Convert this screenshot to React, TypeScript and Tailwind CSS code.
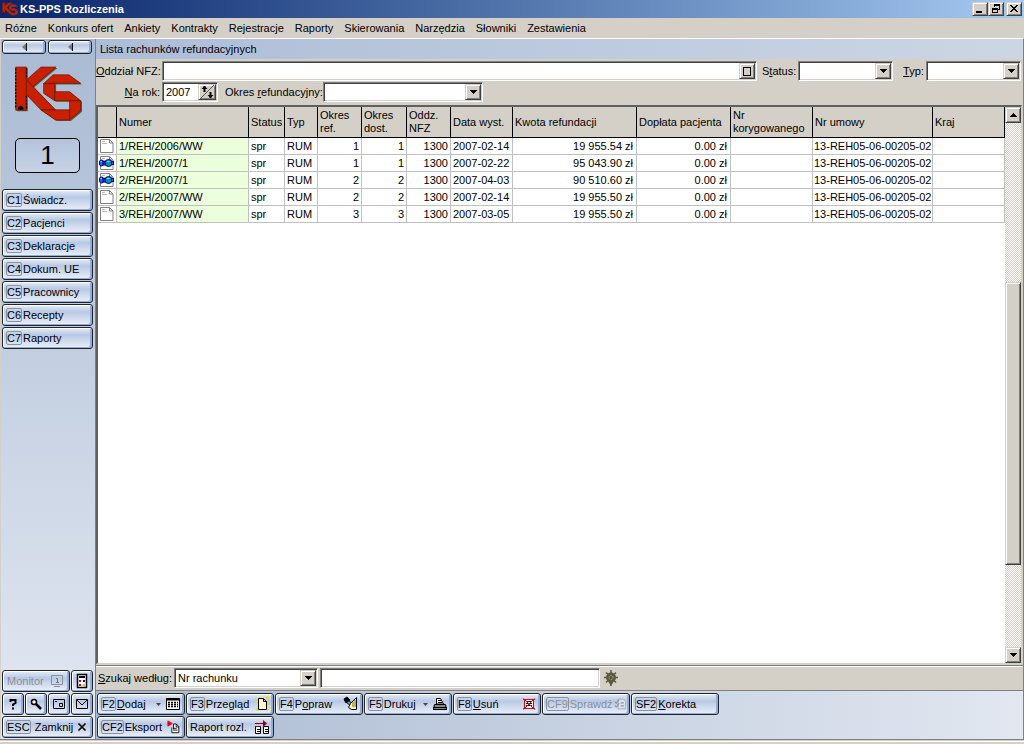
import type { ReactNode } from "react";
import clsx from "clsx";

interface Invoice {
  number: string;
  locked: boolean;
  refPeriod: number;
  supplyPeriod: number;
  date: string;
  amount: string;
}

const MENU = [
  "Różne",
  "Konkurs ofert",
  "Ankiety",
  "Kontrakty",
  "Rejestracje",
  "Raporty",
  "Skierowania",
  "Narzędzia",
  "Słowniki",
  "Zestawienia",
];

const MODULES = [
  ["C1", "Świadcz."],
  ["C2", "Pacjenci"],
  ["C3", "Deklaracje"],
  ["C4", "Dokum. UE"],
  ["C5", "Pracownicy"],
  ["C6", "Recepty"],
  ["C7", "Raporty"],
];

const COLUMNS = [
  { label: "", width: "w-[19px]" },
  { label: "Numer", width: "w-[132px]" },
  { label: "Status", width: "w-[36px]" },
  { label: "Typ", width: "w-[33px]" },
  { label: "Okres ref.", width: "w-[44px]" },
  { label: "Okres dost.", width: "w-[45px]" },
  { label: "Oddz. NFZ", width: "w-[44px]" },
  { label: "Data wyst.", width: "w-[62px]" },
  { label: "Kwota refundacji", width: "w-[124px]" },
  { label: "Dopłata pacjenta", width: "w-[94px]" },
  { label: "Nr korygowanego", width: "w-[82px]" },
  { label: "Nr umowy", width: "w-[120px]" },
  { label: "Kraj", width: "" },
];

const INVOICES: Invoice[] = [
  { number: "1/REH/2006/WW", locked: false, refPeriod: 1, supplyPeriod: 1, date: "2007-02-14", amount: "19 955.54 zł" },
  { number: "1/REH/2007/1", locked: true, refPeriod: 1, supplyPeriod: 1, date: "2007-02-22", amount: "95 043.90 zł" },
  { number: "2/REH/2007/1", locked: true, refPeriod: 2, supplyPeriod: 2, date: "2007-04-03", amount: "90 510.60 zł" },
  { number: "2/REH/2007/WW", locked: false, refPeriod: 2, supplyPeriod: 2, date: "2007-02-14", amount: "19 955.50 zł" },
  { number: "3/REH/2007/WW", locked: false, refPeriod: 3, supplyPeriod: 3, date: "2007-03-05", amount: "19 955.50 zł" },
];

const RAISED =
  "border border-t-[#d4d0c8] border-l-[#d4d0c8] border-r-[#404040] border-b-[#404040] bg-[#d4d0c8] shadow-[inset_1px_1px_0_#fff,inset_-1px_-1px_0_#808080]";
const SUNKEN =
  "border border-t-[#808080] border-l-[#808080] border-r-white border-b-white bg-white shadow-[inset_1px_1px_0_#404040,inset_-1px_-1px_0_#d4d0c8]";

function Logo({ className }: { className?: string }) {
  return (
    <svg viewBox="42 97 202 166" className={className} aria-hidden="true">
      <g fill="#5c5a42" transform="translate(4 3)">
        <path d="M47 100h32v128H47zM79 138l43-38h45l-69 58 67 69h42v-27h-44l-33-22v-28l28-26h47l35 25h-77v24h44l33 27v30l-33 27h-42l-43-29-43-45z" />
      </g>
      <g fill="#c82000" stroke="#6e1200" strokeWidth="2" strokeLinejoin="round">
        <path d="M47 100h32v128H47z" />
        <path d="M79 138l43-38h45l-69 58z" />
        <path d="M79 138l86 89h-43l-43-45z" />
        <path d="M130 149l28-26h47l35 25h-77z" />
        <path d="M130 149h33v51l-33-22z" />
        <path d="M163 173h44l33 27h-77z" />
        <path d="M207 200h33v30l-33 27z" />
        <path d="M122 227h85v30h-42z" />
      </g>
      <path d="M47 104v120M79 104v30M79 186v40" stroke="#111" strokeWidth="4" strokeDasharray="6 4" />
      <path d="M54 227v-6l6-6h4l6 6v6z" fill="#000" />
    </svg>
  );
}

function DocIcon({ locked }: { locked: boolean }) {
  return (
    <svg width="16" height="16" viewBox="0 0 16 16" className="mx-auto block" aria-hidden="true">
      <path d="M1.5 1.5h9l3.5 3.5v9.5h-12.5z" fill="#fff" stroke="#808080" />
      <path d="M10.5 1.5v3.5h3.5" fill="none" stroke="#808080" />
      <path d="M3 3.5h3M3 5.5h5" stroke="#b8b8b8" />
      {locked && (
        <g stroke="#000080">
          <rect x="0.5" y="5" width="4" height="6" rx="2" fill="#2868f0" />
          <rect x="4" y="6.5" width="4" height="3.500" fill="#0c50d8" />
          <circle cx="9.5" cy="8" r="3.5" fill="#0a90b8" />
          <rect x="12.500" y="6.500" width="2" height="3" fill="#2868f0" />
          <path d="M8 6.5h2.5M1.500 6.500h1.500" stroke="#50f0e8" />
        </g>
      )}
    </svg>
  );
}

function Arrow({ up = false }: { up?: boolean }) {
  return (
    <svg width="7" height="4" viewBox="0 0 7 4" shapeRendering="crispEdges" aria-hidden="true">
      <path d={up ? "M3 0h1v1h1v1h1v1h1v1H0V3h1V2h1V1h1z" : "M0 0h7v1H6v1H5v1H4v1H3V3H2V2H1V1H0z"} />
    </svg>
  );
}

function WindowButton({ label, children }: { label: string; children: ReactNode }) {
  return (
    <button type="button" aria-label={label} className={clsx(RAISED, "flex h-[14px] w-4 items-center justify-center")}>
      <svg width="12" height="10" viewBox="0 0 12 10" shapeRendering="crispEdges">
        {children}
      </svg>
    </button>
  );
}

interface GlossButtonProps {
  hotkey?: string;
  label?: ReactNode;
  title?: string;
  icon?: ReactNode;
  menu?: boolean;
  disabled?: boolean;
  className?: string;
}

function GlossButton({ hotkey, label, title, icon, menu, disabled, className }: GlossButtonProps) {
  return (
    <button
      type="button"
      aria-label={title}
      disabled={disabled}
      className={clsx(
        "flex items-center rounded-[3px] border border-[#20242c] bg-linear-to-b from-[#e4edfa] via-[#b8c8e4] via-35% to-[#eaf0f9] whitespace-nowrap shadow-[inset_1px_1px_0_#fff,inset_-2px_-1px_0_#94abd6]",
        disabled ? "text-[#8a8f98]" : "text-black",
        className
      )}
    >
      {hotkey && (
        <span className="mr-px flex h-[14px] shrink-0 items-center rounded-[2px] border border-[#8c929c]">
          {hotkey}
        </span>
      )}
      {label && <span>{label}</span>}
      {icon && (
        <span className={clsx("flex shrink-0 items-center gap-1", label && "ml-auto")}>
          {menu && (
            <svg width="5" height="3" viewBox="0 0 5 3" aria-hidden="true">
              <path d="M0 0h5L2.5 3z" fill="#444" />
            </svg>
          )}
          {icon}
        </span>
      )}
    </button>
  );
}

function Icon({ children, size = 16 }: { children: ReactNode; size?: number }) {
  return (
    <svg width={size} height={size} viewBox="0 0 16 16" fill="none" stroke="#000" aria-hidden="true">
      {children}
    </svg>
  );
}

const gridIcon = (
  <Icon>
    <path d="M1.5 2.5h13v11h-13z" fill="#fff" />
    <path d="M1 3.5h14" strokeWidth="2" />
    <path d="M3 6.5h10M3 8.5h10M3 10.5h10" strokeWidth="1.500" strokeDasharray="2 1" />
  </Icon>
);
const newDocIcon = (
  <Icon>
    <path d="M1 3l3 2M2 14l3-2M12 2l3-1M12 12l3 2M13 8h3M6 1v2" stroke="#f0e000" strokeWidth="2" />
    <path d="M4.5 2.5h5l3 3v8h-8z" fill="#fff8c8" />
    <path d="M9.5 2.5v3h3" />
  </Icon>
);
const editIcon = (
  <Icon>
    <path d="M1.5 4.5l2-2 8 7-2 2z" fill="#20c8d0" />
    <path d="M1 3l3-2 3 3-4 3z" fill="#000" />
    <path d="M7.5 7.5l6-6v12l-5 0-3-2z" fill="#fff8b0" />
    <path d="M10 6v5M12 4v7" stroke="#706820" />
  </Icon>
);
const printIcon = (
  <Icon>
    <path d="M4.5 8V2.5h4l3 5.5z" fill="#fff" />
    <path d="M6 4.5h3M6 6.5h4" />
    <path d="M2.5 8.5h11l1 5h-13z" fill="#888" />
    <path d="M1 11.5h14M1 13.5h14" />
  </Icon>
);
const deleteIcon = (
  <Icon>
    <path d="M3.5 3.5h9v9h-9z" fill="#fff" />
    <path d="M5 5.5h6M5 7.5h6M5 9.5h6" />
    <path d="M2.5 2.5l11 11M13.5 2.5l-11 11M2 3.5h12M2 12.5h12M3.500 3v10M12.500 3v10" stroke="#e00010" />
  </Icon>
);
const checkIcon = (
  <Icon size={12}>
    <path d="M5.5 1.5h7l3 3v10h-10z" fill="#dce3ee" stroke="#9aa0aa" />
    <path d="M1 5l2 2 4-5M1 10l2 2 4-5M9 6.5h4M9 10.5h4" stroke="#8a8f98" strokeWidth="1.500" />
  </Icon>
);
const exportIcon = (
  <Icon size={14}>
    <path d="M1 1l5 3-5 3z" fill="#f00010" stroke="#f00010" />
    <path d="M5.5 8.5v6h8v-7l-3-3h-3v6" fill="#fff" />
    <path d="M7 9.5h4M7 11.5h5M10.5 5v3h3" />
  </Icon>
);
const reportIcon = (
  <Icon>
    <path d="M1.5 7.5h5v7h-5zM9.5 7.5h5v7h-5z" fill="#fff" />
    <path d="M3 10.5h3M3 12.5h3M11 10.5h3M11 12.5h3" />
    <path d="M1 4.5h11M1 7.5h6" stroke="#900010" />
    <path d="M9 1l4 3.5L9 8z" fill="#900010" stroke="none" />
  </Icon>
);
const monitorIcon = (
  <Icon>
    <path d="M2.5 2.5h11v9h-11zM5 13.5h6" stroke="#8a8f98" />
    <path d="M7 5.5h1.5v4M7 9.5h3" stroke="#777" />
  </Icon>
);
const calculatorIcon = (
  <Icon>
    <path d="M3.5 1.5h9v13h-9z" fill="#fff" strokeWidth="1.500" />
    <path d="M5 4h6" strokeWidth="2" />
    <path d="M5 8h2M5 12h2" stroke="#e00000" strokeWidth="2" />
    <path d="M9 8h2" stroke="#0000d0" strokeWidth="2" />
    <path d="M9 12h2" stroke="#e0c000" strokeWidth="2" />
  </Icon>
);
const helpIcon = (
  <Icon>
    <path d="M5.5 6V4h5v3l-2.500 1.500V10M8 11.5v2" strokeWidth="2" />
  </Icon>
);
const searchIcon = (
  <Icon>
    <circle cx="6" cy="6" r="2.500" fill="#fff" strokeWidth="1.500" />
    <path d="M8 8l5 5" strokeWidth="2.500" />
  </Icon>
);
const photoIcon = (
  <Icon>
    <path d="M2.5 3.5h11v9h-11z" />
    <path d="M4 5.5h2M8.500 7.500h3v3h-3z" />
  </Icon>
);
const mailIcon = (
  <Icon>
    <path d="M2.5 3.5h11v9h-11zM3 4l5 5 5-5" />
  </Icon>
);
const closeIcon = (
  <Icon size={14}>
    <path d="M4 4l8 8M12 4l-8 8" strokeWidth="2" />
  </Icon>
);

const ACTIONS: GlossButtonProps[] = [
  { hotkey: "F2", label: <><u>D</u>odaj</>, icon: gridIcon, menu: true },
  { hotkey: "F3", label: "Przegląd", icon: newDocIcon },
  { hotkey: "F4", label: <>P<u>o</u>praw</>, icon: editIcon },
  { hotkey: "F5", label: "Drukuj", icon: printIcon, menu: true },
  { hotkey: "F8", label: <><u>U</u>suń</>, icon: deleteIcon },
  { hotkey: "CF9", label: "Sprawdź", icon: checkIcon, disabled: true },
  { hotkey: "SF2", label: <><u>K</u>orekta</> },
];

const EXPORTS: GlossButtonProps[] = [
  { hotkey: "CF2", label: "Eksport", icon: exportIcon },
  { label: "Raport rozl.", icon: reportIcon },
];

function SelectBox({ id, options, className }: { id: string; options: string[]; className: string }) {
  return (
    <div className={clsx(SUNKEN, "relative h-5", className)}>
      <select id={id} className="h-full w-full appearance-none bg-transparent pr-4 pl-[3px] outline-none">
        {options.map((option) => (
          <option key={option}>{option}</option>
        ))}
      </select>
      <span
        className={clsx(RAISED, "pointer-events-none absolute top-px right-px bottom-px flex w-4 items-center justify-center")}
      >
        <Arrow />
      </span>
    </div>
  );
}

function Sidebar() {
  return (
    <aside className="flex w-24 shrink-0 flex-col border-r border-l border-l-[#d4d0c8] border-r-[#808080] bg-linear-to-b from-[#a9bad3] to-[#e4e9f2] pt-px pr-0.5 pl-px">
      <div className="flex gap-0.5">
        {["Poprzedni", "Wstecz"].map((title) => (
          <GlossButton
            key={title}
            title={title}
            className="h-[14px] w-11 justify-center"
            icon={
              <svg width="5" height="8" viewBox="0 0 5 8">
                <path d="M4.5 0v8L0 4z" fill="#777" />
                <path d="M4.5 0v8" stroke="#111" />
              </svg>
            }
          />
        ))}
      </div>
      <Logo className="mt-3 ml-3 h-14 w-[68px]" />
      <div className="mx-auto mt-4 flex h-[35px] w-[65px] items-center justify-center rounded-[5px] border border-black bg-linear-to-b from-[#b4c4dc] to-[#c6d2e5] text-[26px]">
        1
      </div>
      <nav className="mt-4 flex flex-col gap-px">
        {MODULES.map(([hotkey, label]) => (
          <GlossButton key={hotkey} hotkey={hotkey} label={label} className="h-[22px] w-[91px] pl-[3px]" />
        ))}
      </nav>
      <div className="mt-auto flex w-[91px] flex-col gap-px pb-px">
        <div className="flex gap-px">
          <GlossButton label="Monitor" disabled icon={monitorIcon} className="h-[22px] flex-1 pr-1 pl-1" />
          <GlossButton title="Kalkulator" icon={calculatorIcon} className="h-[22px] w-[22px] justify-center" />
        </div>
        <div className="grid grid-cols-4 gap-px">
          <GlossButton title="Pomoc" icon={helpIcon} className="h-[22px] justify-center" />
          <GlossButton title="Szukaj" icon={searchIcon} className="h-[22px] justify-center" />
          <GlossButton title="Zdjęcie" icon={photoIcon} className="h-[22px] justify-center" />
          <GlossButton title="Poczta" icon={mailIcon} className="h-[22px] justify-center" />
        </div>
        <GlossButton hotkey="ESC" label={<>&nbsp;Zamknij</>} icon={closeIcon} className="h-[22px] pr-[3px] pl-[3px]" />
      </div>
    </aside>
  );
}

function Filters() {
  return (
    <div className="flex flex-col gap-px pt-0.5 pr-0.5 pb-[3px]">
      <div className="flex items-center">
        <label htmlFor="branch" className="w-[66px] whitespace-nowrap">
          <u>O</u>ddział NFZ:
        </label>
        <div className={clsx(SUNKEN, "flex h-5 flex-1 p-px")}>
          <input id="branch" className="min-w-0 flex-1 bg-transparent px-0.5 outline-none" />
          <button type="button" aria-label="Wybierz oddział" className={clsx(RAISED, "flex w-4 items-center justify-center")}>
            <span className="h-[9px] w-2 border border-black" />
          </button>
        </div>
        <label htmlFor="status" className="ml-[5px] w-9">
          S<u>t</u>atus:
        </label>
        <SelectBox id="status" options={[""]} className="w-[95px]" />
        <label htmlFor="type" className="ml-[10px] w-[23px]">
          <u>T</u>yp:
        </label>
        <SelectBox id="type" options={[""]} className="w-[95px]" />
      </div>
      <div className="flex items-center">
        <label htmlFor="year" className="w-[66px] pr-0.5 text-right">
          <u>N</u>a rok:
        </label>
        <div className={clsx(SUNKEN, "flex h-5 w-14 p-px")}>
          <input id="year" defaultValue="2007" className="min-w-0 flex-1 bg-transparent px-0.5 outline-none" />
          <button type="button" aria-label="Zmień rok" className={clsx(RAISED, "flex w-[18px] items-center justify-center")}>
            <svg width="14" height="14" viewBox="0 0 14 14" fill="none" stroke="#000">
              <path d="M0 14L14 0" stroke="#555" />
              <path d="M4.5 1v6M10.5 7v6" strokeWidth="2" />
              <path d="M1.5 4l3-3 3 3zM7.5 10l3 3 3-3z" fill="#000" stroke="none" />
            </svg>
          </button>
        </div>
        <label htmlFor="period" className="ml-[7px] w-[98px] whitespace-nowrap">
          Okres <u>r</u>efundacyjny:
        </label>
        <SelectBox id="period" options={[""]} className="w-40" />
      </div>
    </div>
  );
}

function InvoiceTable() {
  const line = "h-[17px] border-r border-b border-[#c0c0c0] whitespace-nowrap overflow-hidden";
  const cell = clsx(line, "px-0.5");
  return (
    <table className="w-full table-fixed border-separate border-spacing-0 bg-white">
      <thead>
        <tr className="bg-[#d4d0c8]">
          {COLUMNS.map((column) => (
            <th
              key={column.label}
              className={clsx(
                "h-[31px] border-r border-b border-black px-0.5 text-left align-middle leading-[13px] font-normal",
                column.width
              )}
            >
              {column.label}
            </th>
          ))}
        </tr>
      </thead>
      <tbody className="leading-4">
        {INVOICES.map((row) => (
          <tr key={row.number}>
            <td className={line}>
              <DocIcon locked={row.locked} />
            </td>
            <td className={clsx(cell, "bg-[#ecffdc]")}>{row.number}</td>
            <td className={cell}>spr</td>
            <td className={cell}>RUM</td>
            <td className={clsx(cell, "text-right")}>{row.refPeriod}</td>
            <td className={clsx(cell, "text-right")}>{row.supplyPeriod}</td>
            <td className={clsx(cell, "text-right")}>1300</td>
            <td className={cell}>{row.date}</td>
            <td className={clsx(line, "pr-[3px] text-right")}>{row.amount}</td>
            <td className={clsx(line, "pr-[3px] text-right")}>0.00 zł</td>
            <td className={cell} />
            <td className={clsx(line, "pl-px")}>13-REH05-06-00205-02</td>
            <td className={cell} />
          </tr>
        ))}
      </tbody>
    </table>
  );
}

function ScrollBar() {
  return (
    <div className="flex w-4 shrink-0 flex-col bg-[repeating-conic-gradient(#d4d0c8_0_25%,#fff_0_50%)] bg-size-[2px_2px]">
      <button type="button" aria-label="W górę" className={clsx(RAISED, "flex h-4 items-center justify-center")}>
        <Arrow up />
      </button>
      <div className="grow-[160]" />
      <div className={clsx(RAISED, "grow-[282]")} />
      <div className="grow-[82]" />
      <button type="button" aria-label="W dół" className={clsx(RAISED, "flex h-4 items-center justify-center")}>
        <Arrow />
      </button>
    </div>
  );
}

export default function App() {
  return (
    <div className="flex h-screen flex-col overflow-hidden bg-[#d4d0c8] font-['Liberation_Sans',sans-serif] text-[11px] leading-[13px] text-black">
      <header className="flex h-[18px] shrink-0 items-center bg-linear-to-r from-[#0a246a] to-[#a6caf0] pr-0.5 pl-0.5 text-white">
        <Logo className="h-4 w-4" />
        <h1 className="ml-0.5 font-bold">KS-PPS Rozliczenia</h1>
        <div className="ml-auto flex">
          <WindowButton label="Minimalizuj">
            <path d="M2 7h6v2H2z" />
          </WindowButton>
          <WindowButton label="Przywróć">
            <path d="M4 0h6v6H8V5h1V2H5v1H4zM2 4h6v5H2zM3 6v2h4V6z" fillRule="evenodd" />
          </WindowButton>
          <span className="w-0.5" />
          <WindowButton label="Zamknij">
            <path d="M2 1h2v1h1v1h2V2h1V1h2v1H9v1H8v1H7v1h1v1h1v1h1v1H8V7H7V6H5v1H4v1H2V7h1V6h1V5h1V4H4V3H3V2H2z" />
          </WindowButton>
        </div>
      </header>

      <nav className="flex h-5 shrink-0 items-center gap-[11px] pl-[5px]">
        {MENU.map((item) => (
          <button key={item} type="button" className="whitespace-nowrap">
            {item}
          </button>
        ))}
      </nav>

      <div className="flex min-h-0 flex-1 border-t border-r border-t-white border-r-[#808080]">
        <Sidebar />
        <main className="flex min-w-0 flex-1 flex-col">
          <h2 className="flex h-5 shrink-0 items-center bg-linear-to-r from-[#adbdd8] to-[#ccd6e4] pl-1">
            Lista rachunków refundacyjnych
          </h2>
          <Filters />
          <section className="mr-px flex min-h-0 flex-1 border-t-2 border-r border-b border-l-2 border-t-[#606060] border-r-[#d4d0c8] border-b-[#d4d0c8] border-l-[#606060] bg-white">
            <div className="min-w-0 flex-1">
              <InvoiceTable />
            </div>
            <ScrollBar />
          </section>

          <div className="mt-px flex h-[26px] shrink-0 items-center border-t border-b border-t-[#808080] border-b-[#808080] pl-0.5 shadow-[inset_0_1px_0_#fff]">
            <label htmlFor="search-by" className="w-[76px] whitespace-nowrap">
              <u>S</u>zukaj według:
            </label>
            <SelectBox id="search-by" options={["Nr rachunku"]} className="w-36" />
            <input aria-label="Szukany tekst" className={clsx(SUNKEN, "ml-0.5 h-5 w-[280px] px-1 outline-none")} />
            <svg width="14" height="16" viewBox="1 0 14 16" className="ml-1" aria-hidden="true">
              <path
                d="M8 0v16M1 7.500h14M3 2.500l10 10M13 2.500l-10 10"
                stroke="#5c5a3c"
                strokeWidth="1.500"
                strokeDasharray="none"
              />
              <circle cx="8" cy="7.500" r="5" fill="#5c5a3c" />
              <path d="M5 11h6l-3 5z" fill="#5c5a3c" />
              <circle cx="8" cy="7.500" r="2" fill="none" stroke="#b8b6a0" strokeDasharray="1 1" />
            </svg>
          </div>

          <div className="flex shrink-0 flex-col gap-px bg-linear-to-r from-[#aabad2] to-[#e2e7f0] pt-0.5 pb-px pl-px">
            <div className="flex gap-px">
              {ACTIONS.map((action) => (
                <GlossButton key={action.hotkey} {...action} className="h-[22px] w-[88px] pr-[3px] pl-[3px]" />
              ))}
            </div>
            <div className="flex gap-px">
              {EXPORTS.map((action, i) => (
                <GlossButton key={i} {...action} className="h-[22px] w-[88px] pr-[3px] pl-[3px]" />
              ))}
            </div>
          </div>
        </main>
      </div>
      <footer className="h-[5px] shrink-0 border-t border-t-[#808080] shadow-[inset_0_1px_0_#d4d0c8,inset_0_2px_0_#fff]" />
    </div>
  );
}
